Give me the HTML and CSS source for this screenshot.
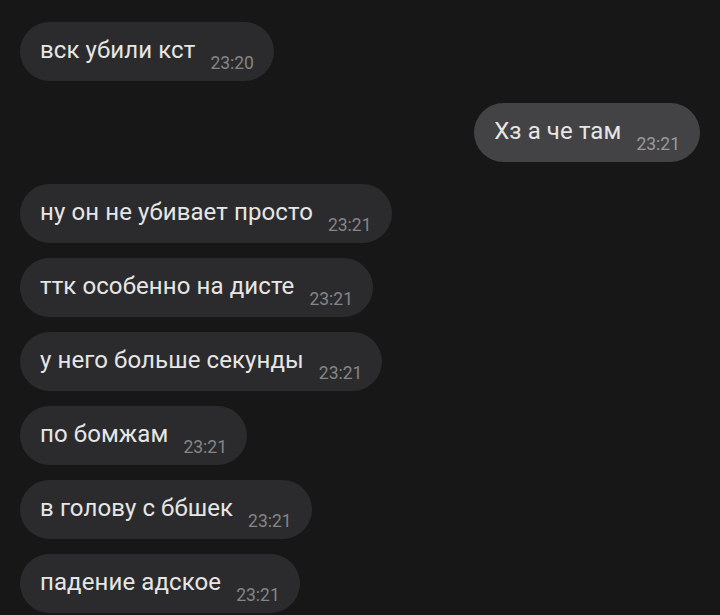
FILE: index.html
```html
<!DOCTYPE html>
<html lang="ru">
<head>
<meta charset="utf-8">
<link rel="stylesheet" href="styles.css">
</head>
<body>
<div class="chat">
  <div class="group in">
    <div class="bubble"><span class="text">вск убили кст</span><span class="time">23:20</span></div>
  </div>
  <div class="group out">
    <div class="bubble"><span class="text">Хз а че там</span><span class="time">23:21</span></div>
  </div>
  <div class="group in">
    <div class="bubble"><span class="text">ну он не убивает просто</span><span class="time">23:21</span></div>
    <div class="bubble"><span class="text">ттк особенно на дисте</span><span class="time">23:21</span></div>
    <div class="bubble"><span class="text">у него больше секунды</span><span class="time">23:21</span></div>
    <div class="bubble"><span class="text">по бомжам</span><span class="time">23:21</span></div>
    <div class="bubble"><span class="text">в голову с ббшек</span><span class="time">23:21</span></div>
    <div class="bubble"><span class="text">падение адское</span><span class="time">23:21</span></div>
  </div>
</div>
</body>
</html>
```
FILE: styles.css
```css
html, body {
  margin: 0;
  padding: 0;
  background: #171717;
}
body {
  font-family: Roboto, "Noto Sans", sans-serif;
  width: 720px;
  height: 615px;
  overflow: hidden;
}
.chat {
  display: flex;
  flex-direction: column;
  gap: 22px;
  padding: 22px 20px 0;
}
.group {
  display: flex;
  flex-direction: column;
  gap: 15px;
}
.group.in { align-items: flex-start; }
.group.out { align-items: flex-end; }
.bubble {
  display: flex;
  align-items: flex-start;
  box-sizing: border-box;
  height: 59px;
  padding: 14px 20px 0 20px;
  border-radius: 30px;
  background: #2b2b2d;
}
.out .bubble {
  background: #434345;
}
.text {
  font-size: 24px;
  line-height: 28px;
  letter-spacing: 0.1px;
  color: #e6e6e6;
  white-space: nowrap;
}
.time {
  margin-top: 17px;
  margin-left: 15px;
  font-size: 17.5px;
  line-height: 20px;
  color: #858587;
}
.out .time { color: #9a9a9c; }
```
